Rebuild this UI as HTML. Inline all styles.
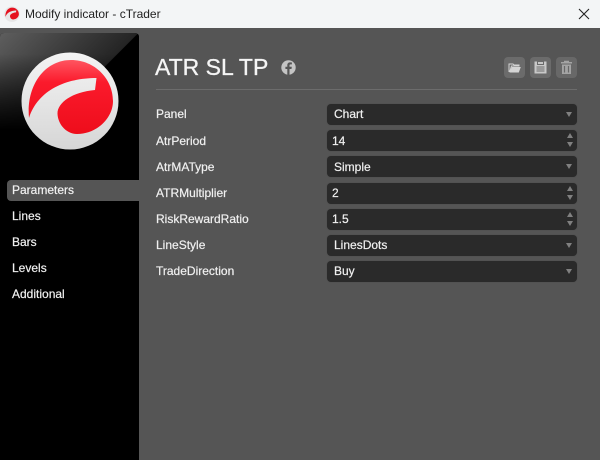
<!DOCTYPE html>
<html><head><meta charset="utf-8">
<style>
html,body{margin:0;padding:0;width:600px;height:460px;overflow:hidden;background:#555;font-family:"Liberation Sans",sans-serif;}
.abs{position:absolute}
#tb{left:0;top:0;width:600px;height:28px;background:#f3f5f6;color:#222;font-size:12px;line-height:28px;}
#tb span{position:absolute;left:25px;top:0;white-space:nowrap}
#side{left:0;top:33px;width:139px;height:427px;background:#000;border-radius:4px 4px 0 0;overflow:hidden}
#gloss{left:0;top:0;width:139px;height:139px;background:linear-gradient(135deg,#5e5e5e 0%,#242424 49.6%,#000 50%);-webkit-mask-image:linear-gradient(to bottom,#000 0,#000 15%,transparent 70%);mask-image:linear-gradient(to bottom,#000 0,#000 15%,transparent 70%)}
.nav{left:12px;color:#f0f0f0;font-size:12px;line-height:14px;white-space:nowrap;-webkit-text-stroke:.2px #f0f0f0}
#sel{left:7px;top:180px;width:132px;height:21px;background:#555;border-radius:4px 0 0 4px}
h1{position:absolute;left:155px;top:52px;margin:0;font-size:23px;font-weight:normal;color:#f5f5f5;line-height:30px;white-space:nowrap;-webkit-text-stroke:.3px #f5f5f5}
#hr{left:156px;top:89px;width:421px;height:1px;background:#6c6c6c}
.lab{left:156px;color:#f0f0f0;font-size:12px;line-height:14px;white-space:nowrap;-webkit-text-stroke:.2px #f0f0f0}
.f{left:327px;width:250px;height:21px;background:#2a2a2a;border-radius:4px;color:#f0f0f0;font-size:12px;line-height:21px;-webkit-text-stroke:.2px #f0f0f0;box-shadow:0 0 1px #444}
.f span{position:absolute;left:7px;top:0}
.f.n span{left:5px}
.f i{position:absolute;right:5px;top:8px;width:0;height:0;border-left:3px solid transparent;border-right:3px solid transparent;border-top:5px solid #808080}
.f.n i.u{top:3px;border-top:0;border-bottom:5px solid #808080;right:4px}
.f.n i.d{top:12px;border-top:5px solid #808080;right:4px}
.btn{top:57px;width:21px;height:21px;background:#6b6b6b;border-radius:4px}
</style></head><body>
<div id="tb" class="abs">
<svg class="abs" style="left:4px;top:6px" width="16" height="16" viewBox="20 50 100 100"><circle cx="70" cy="101" r="48.500" fill="#e6e6e6"/><path d="M29 118C26 85 45 60 71 60C95 60 113 79 113 101C113 118 97 134 77 134C66 134 58 124 57.500 114C57 103 72 92 95 90L96.500 78C66 78 38 90 29 118Z" fill="#e5121f"/></svg>
<span>Modify indicator - cTrader</span>
<svg class="abs" style="left:578px;top:8px" width="12" height="12" viewBox="0 0 12 12"><path d="M1 1L11 11M11 1L1 11" stroke="#222" stroke-width="1.1" fill="none"/></svg>
</div>

<div id="side" class="abs"><div id="gloss" class="abs"></div></div>
<svg class="abs" style="left:0;top:0" width="140" height="170" viewBox="0 0 140 170">
<defs><linearGradient id="r" x1="0" y1="0" x2="0" y2="1"><stop offset="0" stop-color="#ff5560"/><stop offset=".3" stop-color="#fb1a2c"/><stop offset="1" stop-color="#ee0d1b"/></linearGradient>
<linearGradient id="g" x1="0" y1="0" x2="0" y2="1"><stop offset="0" stop-color="#f4f4f4"/><stop offset="1" stop-color="#d6d6d6"/></linearGradient></defs>
<circle cx="70" cy="101" r="48.500" fill="url(#g)"/>
<path d="M29 118C26 85 45 60 71 60C95 60 113 79 113 101C113 118 97 134 77 134C66 134 58 124 57.500 114C57 103 72 92 95 90L96.500 78C66 78 38 90 29 118Z" fill="url(#r)"/>
</svg>
<div id="sel" class="abs"></div>
<div class="nav abs" style="top:183px">Parameters</div>
<div class="nav abs" style="top:209px">Lines</div>
<div class="nav abs" style="top:235px">Bars</div>
<div class="nav abs" style="top:261px">Levels</div>
<div class="nav abs" style="top:287px">Additional</div>

<h1>ATR SL TP</h1>
<svg class="abs" style="left:281px;top:60px" width="15" height="15" viewBox="0 0 15 15"><circle cx="7.500" cy="7.500" r="7.200" fill="#c4c4c4"/><path d="M8.500 15V9h2l.3-2.200H8.500V5.500c0-.7.3-1.100 1.100-1.100h1.300V2.500c-.5-.1-1.100-.1-1.700-.1-1.800 0-2.900 1-2.900 2.900v1.500H4.400V9h1.900v6Z" fill="#555"/></svg>
<div id="hr" class="abs"></div>

<div class="btn abs" style="left:504px"><svg width="21" height="21" viewBox="0 0 21 21"><path d="M5 14.500V7h4l1 1h5v1H7.500L5.800 14.500Z" fill="none" stroke="#d4d4d4" stroke-width="1"/><path d="M7.800 10h9l-2 5.500H5.500Z" fill="#d4d4d4"/></svg></div>
<div class="btn abs" style="left:530px"><svg width="21" height="21" viewBox="0 0 21 21"><path d="M4.500 4.500h12v12h-12Z" fill="#c8c8c8"/><path d="M7.500 4.500h6v3h-6ZM6.500 10h8M6.500 12h8M6.500 14h8" fill="none" stroke="#6b6b6b" stroke-width="1"/></svg></div>
<div class="btn abs" style="left:556px;background:#686868"><svg width="21" height="21" viewBox="0 0 21 21"><path d="M6 7.500h9V17H6Z" fill="#a4a4a4"/><path d="M5 5h11v1.500H5ZM8 3.800h5V5H8Z" fill="#a4a4a4"/><path d="M8.500 9v6.500M12.500 9v6.500" stroke="#686868" stroke-width="1.200"/></svg></div>

<div class="lab abs" style="top:107px">Panel</div>
<div class="lab abs" style="top:134px">AtrPeriod</div>
<div class="lab abs" style="top:160px">AtrMAType</div>
<div class="lab abs" style="top:186px">ATRMultiplier</div>
<div class="lab abs" style="top:212px">RiskRewardRatio</div>
<div class="lab abs" style="top:238px">LineStyle</div>
<div class="lab abs" style="top:264px">TradeDirection</div>

<div class="f abs" style="top:104px"><span>Chart</span><i></i></div>
<div class="f n abs" style="top:130px"><span style="top:1px">14</span><i class="u"></i><i class="d"></i></div>
<div class="f abs" style="top:156px"><span style="top:1px">Simple</span><i></i></div>
<div class="f n abs" style="top:183px"><span>2</span><i class="u"></i><i class="d"></i></div>
<div class="f n abs" style="top:209px"><span>1.5</span><i class="u"></i><i class="d"></i></div>
<div class="f abs" style="top:235px"><span>LinesDots</span><i></i></div>
<div class="f abs" style="top:261px"><span>Buy</span><i></i></div>
</body></html>
